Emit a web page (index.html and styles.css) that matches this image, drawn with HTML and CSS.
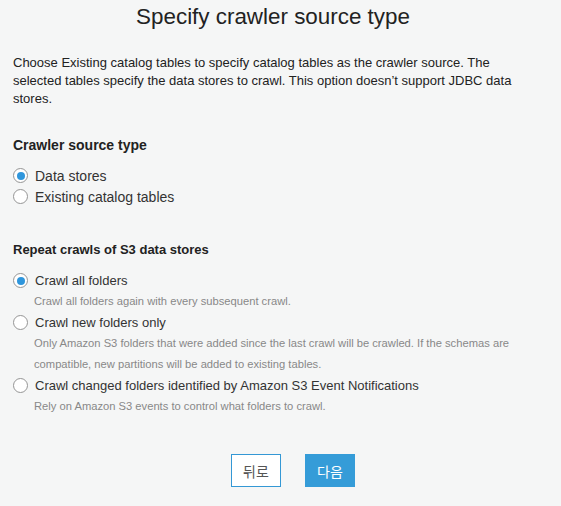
FILE: index.html
```html
<!DOCTYPE html>
<html>
<head>
<meta charset="utf-8">
<link rel="stylesheet" href="styles.css">
</head>
<body>
<div class="page">
  <h1 class="title">Specify crawler source type</h1>
  <p class="intro">Choose Existing catalog tables to specify catalog tables as the crawler source. The selected tables specify the data stores to crawl. This option doesn’t support JDBC data stores.</p>

  <div class="section first">
    <div class="heading">Crawler source type</div>
    <label class="opt"><span class="radio checked"></span><span class="lbl">Data stores</span></label>
    <label class="opt"><span class="radio"></span><span class="lbl">Existing catalog tables</span></label>
  </div>

  <div class="section second">
    <div class="heading">Repeat crawls of S3 data stores</div>
    <label class="opt"><span class="radio checked"></span><span class="lbl">Crawl all folders</span></label>
    <div class="desc">Crawl all folders again with every subsequent crawl.</div>
    <label class="opt"><span class="radio"></span><span class="lbl">Crawl new folders only</span></label>
    <div class="desc">Only Amazon S3 folders that were added since the last crawl will be crawled. If the schemas are compatible, new partitions will be added to existing tables.</div>
    <label class="opt"><span class="radio"></span><span class="lbl">Crawl changed folders identified by Amazon S3 Event Notifications</span></label>
    <div class="desc">Rely on Amazon S3 events to control what folders to crawl.</div>
  </div>

  <div class="actions">
    <button class="btn back">뒤로</button>
    <button class="btn next">다음</button>
  </div>
</div>
</body>
</html>
```
FILE: styles.css
```css
html, body {
  margin: 0;
  padding: 0;
  background: #f5f6f6;
}
body {
  font-family: "Liberation Sans", Arial, sans-serif;
  color: #333;
}
.page {
  padding: 0 13px;
}
.title {
  margin: 0;
  padding: 3px 15px 0 0;
  font-size: 22.4px;
  font-weight: normal;
  text-align: center;
  line-height: 28px;
  color: #222;
}
.intro {
  margin: 23px 20px 0 0;
  font-size: 13px;
  line-height: 18px;
  color: #222;
}
.section.first { margin-top: 28px; }
.section.second { margin-top: 34px; }
.heading {
  font-weight: bold;
  line-height: 18px;
  color: #222;
}
.first .heading { font-size: 14px; margin-bottom: 11px; }
.second .heading { font-size: 13px; margin-bottom: 11px; }
.opt {
  display: flex;
  align-items: center;
  height: 21px;
}
.first .opt { font-size: 14px; }
.second .opt { font-size: 13px; }
.radio {
  box-sizing: border-box;
  flex: none;
  width: 15px;
  height: 15px;
  border-radius: 50%;
  border: 1px solid #959595;
  background: #fff;
  margin-right: 7px;
  position: relative;
}
.radio.checked::after {
  content: "";
  position: absolute;
  left: 2.5px;
  top: 2.5px;
  width: 8px;
  height: 8px;
  border-radius: 50%;
  background: #2f96dc;
}
.lbl { color: #333; }
.desc {
  font-size: 11.2px;
  line-height: 21px;
  color: #888;
  padding-left: 21px;
}
.actions {
  display: flex;
  justify-content: center;
  gap: 24px;
  margin-top: 37px;
  padding-left: 25px;
}
.btn {
  box-sizing: border-box;
  width: 50px;
  height: 33px;
  font-family: "Noto Sans CJK KR", sans-serif;
  font-size: 14px;
  border-radius: 0;
  padding: 0;
}
.back {
  background: #fff;
  border: 1px solid #3498d5;
  color: #555;
}
.next {
  background: #359cd8;
  border: 1px solid #359cd8;
  color: #fff;
}
```
